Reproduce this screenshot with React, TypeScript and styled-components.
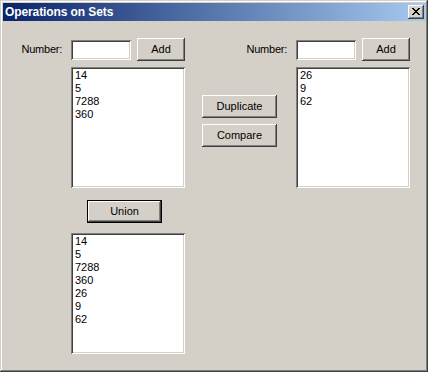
import React from "react";
import styled, { createGlobalStyle, css } from "styled-components";

const GlobalStyle = createGlobalStyle`
  html, body { margin: 0; padding: 0; background: #d4d0c8; }
  * { box-sizing: border-box; }
`;

const FACE = "#d4d0c8";

const raised = css`
  background: ${FACE};
  box-shadow:
    inset -1px -1px #404040,
    inset 1px 1px #ffffff,
    inset -2px -2px #808080,
    inset 2px 2px ${FACE};
`;

const sunken = css`
  background: #ffffff;
  box-shadow:
    inset 1px 1px #808080,
    inset -1px -1px #ffffff,
    inset 2px 2px #404040,
    inset -2px -2px ${FACE};
`;

const Window = styled.div`
  width: 428px;
  height: 372px;
  padding: 3px 2px 2px 3px;
  display: flex;
  flex-direction: column;
  background: ${FACE};
  box-shadow:
    inset -1px -1px #404040,
    inset 1px 1px ${FACE},
    inset -2px -2px #808080,
    inset 2px 2px #ffffff;
  font-family: "Liberation Sans", Arial, sans-serif;
  font-size: 11px;
  color: #000;
`;

const TitleBar = styled.div`
  height: 18px;
  flex: none;
  display: flex;
  align-items: center;
  justify-content: space-between;
  padding: 0 2px 0 2px;
  background: linear-gradient(to right, #0a246a, #a6caf0);
`;

const TitleText = styled.span`
  color: #ffffff;
  font-weight: bold;
  font-size: 12px;
  letter-spacing: -0.1px;
  white-space: nowrap;
`;

const CloseButton = styled.button`
  ${raised};
  width: 16px;
  height: 14px;
  border: none;
  padding: 0 0 1px 0;
  display: flex;
  align-items: center;
  justify-content: center;
`;

const Client = styled.div`
  flex: 1;
  display: flex;
  flex-direction: column;
  padding-top: 17px;
`;

const InputRow = styled.div`
  display: flex;
  padding-left: 19px;
  gap: 61px;
`;

const InputGroup = styled.div<{ $width: number }>`
  width: ${(p) => p.$width}px;
  height: 23px;
  display: flex;
  align-items: center;
  justify-content: flex-end;
`;

const Label = styled.label`
  flex: none;
  margin-right: 9px;
  white-space: nowrap;
  letter-spacing: -0.25px;
  padding-bottom: 1px;
`;

const TextBox = styled.input`
  ${sunken};
  width: 60px;
  height: 20px;
  flex: none;
  border: none;
  outline: none;
  padding: 2px 3px;
  font: inherit;
  margin-right: 6px;
`;

const Button = styled.button<{ $width: number; $default?: boolean }>`
  ${raised};
  width: ${(p) => p.$width}px;
  height: 23px;
  flex: none;
  border: none;
  padding: 0 0 1px 0;
  font: inherit;
  color: #000;
  ${(p) =>
    p.$default &&
    css`
      box-shadow:
        inset 1px 1px #000,
        inset -1px -1px #000,
        inset -2px -2px #404040,
        inset 2px 2px #ffffff,
        inset -3px -3px #808080;
    `}
`;

const ListRow = styled.div`
  display: flex;
  margin-top: 6px;
  padding-left: 68px;
`;

const ListBox = styled.ul<{ $height: number }>`
  ${sunken};
  list-style: none;
  margin: 0;
  width: 114px;
  height: ${(p) => p.$height}px;
  padding: 2px 4px;
  flex: none;
`;

const ListItem = styled.li`
  height: 13px;
  line-height: 13px;
  white-space: nowrap;
`;

const MiddleColumn = styled.div`
  width: 75px;
  margin: 0 19px 0 17px;
  padding-top: 28px;
  display: flex;
  flex-direction: column;
  gap: 6px;
`;

const UnionSection = styled.div`
  display: flex;
  flex-direction: column;
  padding-left: 68px;
  margin-top: 12px;
`;

const UnionButton = styled(Button)`
  margin-left: 16px;
  margin-bottom: 10px;
`;

const CloseGlyph = () => (
  <svg width="8" height="7" viewBox="0 0 8 7" shapeRendering="crispEdges">
    <path
      fill="#000"
      d="M0 0h2v1h-2z M6 0h2v1h-2z M1 1h2v1h-2z M5 1h2v1h-2z M2 2h4v1h-4z M3 3h2v1h-2z M2 4h4v1h-4z M1 5h2v1h-2z M5 5h2v1h-2z M0 6h2v1h-2z M6 6h2v1h-2z"
    />
  </svg>
);

const setA = ["14", "5", "7288", "360"];
const setB = ["26", "9", "62"];
const union = [...setA, ...setB];

const NumberInput = ({ id, width }: { id: string; width: number }) => (
  <InputGroup $width={width}>
    <Label htmlFor={id}>Number:</Label>
    <TextBox id={id} type="text" />
    <Button $width={48}>Add</Button>
  </InputGroup>
);

const List = ({ items, height }: { items: string[]; height: number }) => (
  <ListBox $height={height}>
    {items.map((v, i) => (
      <ListItem key={i}>{v}</ListItem>
    ))}
  </ListBox>
);

export default function App() {
  return (
    <>
      <GlobalStyle />
      <Window>
        <TitleBar>
          <TitleText>Operations on Sets</TitleText>
          <CloseButton aria-label="Close">
            <CloseGlyph />
          </CloseButton>
        </TitleBar>
        <Client>
          <InputRow>
            <NumberInput id="numA" width={163} />
            <NumberInput id="numB" width={164} />
          </InputRow>
          <ListRow>
            <List items={setA} height={121} />
            <MiddleColumn>
              <Button $width={75}>Duplicate</Button>
              <Button $width={75}>Compare</Button>
            </MiddleColumn>
            <List items={setB} height={121} />
          </ListRow>
          <UnionSection>
            <UnionButton $width={75} $default>
              Union
            </UnionButton>
            <List items={union} height={121} />
          </UnionSection>
        </Client>
      </Window>
    </>
  );
}
